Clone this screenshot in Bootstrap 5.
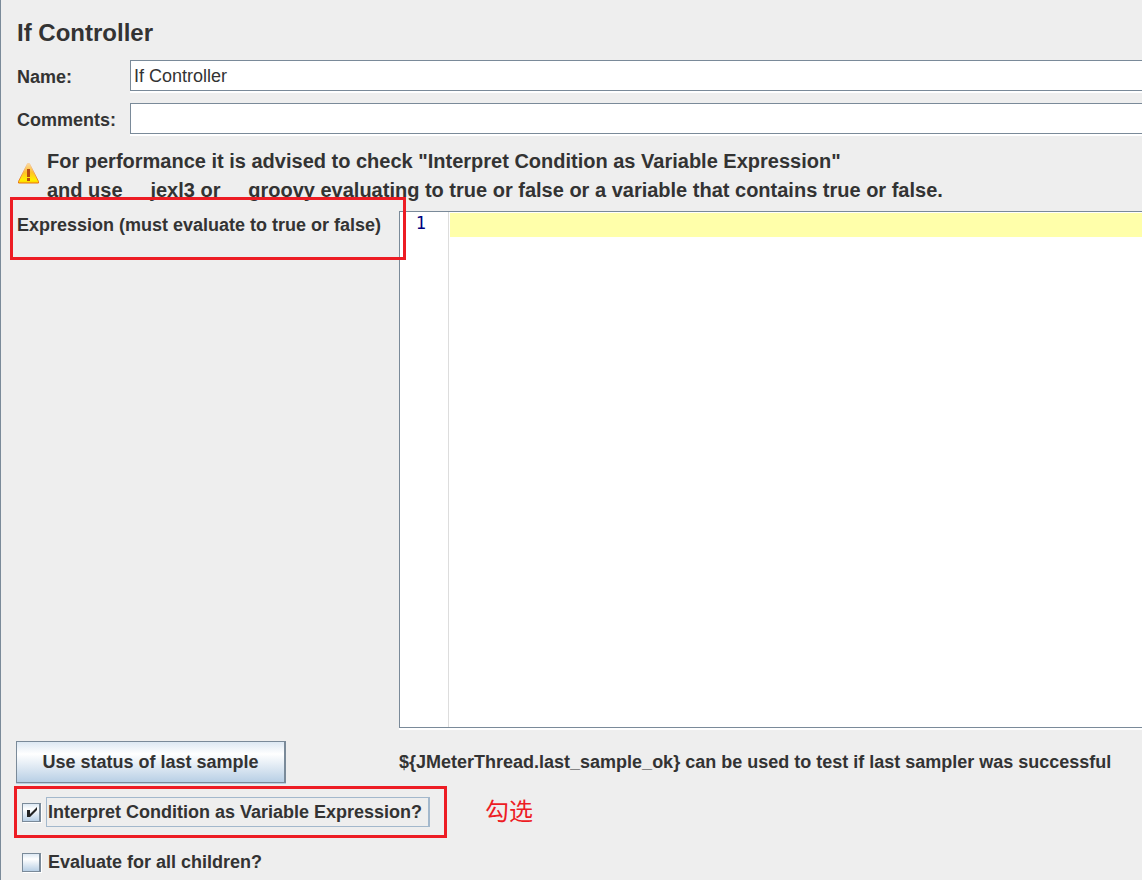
<!DOCTYPE html>
<html lang="en">
<head>
<meta charset="utf-8">
<meta name="viewport" content="width=device-width, initial-scale=1">
<title>If Controller</title>
<link href="https://cdn.jsdelivr.net/npm/bootstrap@5.3.0/dist/css/bootstrap.min.css" rel="stylesheet">
<style>
  :root { --edge: #7a8a99; --mark: #ed1c24; }
  body {
    background: #eee; color: #333;
    font-family: "Liberation Sans", Arial, sans-serif;
    font-size: 18px; line-height: 24px; font-weight: 700;
  }
  .panel { border-left: 1px solid var(--edge); padding: 17px 0 3px 16px; }
  .panel-title { font-size: 24px; line-height: 32px; font-weight: 700; margin-bottom: 11px; }
  .field-label { width: 113px; padding-top: 2px; }
  .field-row { margin-bottom: 12px; }
  .field-row .form-control {
    height: 31px; padding: 2px 3px 0; border: 1px solid var(--edge); border-right: 0;
    color: #333; font-size: 18px; line-height: 24px; box-shadow: 0 2px #fff;
  }
  .notice { font-size: 20px; line-height: 29px; gap: 7px; margin: 1px 0 6px; }
  .notice-icon { margin-bottom: 6px; }
  .expression-label { width: 382px; padding-top: 2px; }
  .editor { border: 1px solid var(--edge); border-right: 0; box-shadow: 0 2px #fff; }
  .gutter {
    width: 49px; border-right: 1px solid #ddd; padding-right: 22px;
    color: #00007f; font: 17px/22px "DejaVu Sans Mono", monospace;
  }
  .code-area {
    resize: none; margin-left: 1px; padding: 0 4px; border: 0;
    font: 17px/24px "Liberation Mono", monospace;
    background: linear-gradient(#ffffaa, #ffffaa) 0 1px / 100% 24px no-repeat #fff;
  }
  .status-row { margin-top: 13px; }
  .status-cell { width: 383px; margin-left: -1px; }
  .btn-metal {
    width: 270px; height: 42px; padding: 0; color: #333; font-size: 18px; font-weight: 700;
    border: 1px solid var(--edge); border-right-width: 2px; box-shadow: 0 1px #b8cfe5;
    background: linear-gradient(#dde8f3, #fff 30%, #b8cfe5);
  }
  .check-row { padding-left: 5px; gap: 5px; }
  .check-marked { height: 52px; margin: 3px 0 9px; }
  .check-row .form-check-input {
    width: 19px; height: 19px; margin: 0; border: 1px solid var(--edge); border-right-width: 2px;
    background-image: linear-gradient(#dde8f3, #fff 30%, #b8cfe5);
    background-size: 100% 100%; box-shadow: 1px 1px #fff;
  }
  .check-row .form-check-input:checked {
    background-color: transparent;
    background-image: url("data:image/svg+xml,%3Csvg xmlns='http://www.w3.org/2000/svg' viewBox='0 0 16 17'%3E%3Cpath d='M4 6h3v4l7-7v3L7 13H4z' fill='%23222'/%3E%3C/svg%3E"), linear-gradient(#dde8f3, #fff 30%, #b8cfe5);
  }
  .check-text { border: 1px solid transparent; padding: 2px 1px; }
  .check-focused { min-width: 384px; border-color: #a3b8cc; border-right-width: 2px; padding-right: 0; }
  .callout-box { border: 3px solid var(--mark); pointer-events: none; }
  .callout-expression { left: -7px; top: -14px; width: 396px; height: 63px; z-index: 2; }
  .callout-check { left: -3px; top: 0; width: 433px; height: 52px; }
  .callout-note {
    color: var(--mark); margin-left: 50px;
    font: 24px/32px "Liberation Sans", "Noto Sans CJK SC", sans-serif;
  }
</style>
</head>
<body>
<main class="panel min-vh-100 d-flex flex-column overflow-hidden">
  <h1 class="panel-title">If Controller</h1>

  <div class="field-row d-flex align-items-center">
    <label class="field-label flex-shrink-0" for="name">Name:</label>
    <input class="form-control rounded-0" id="name" type="text" value="If Controller">
  </div>
  <div class="field-row d-flex align-items-center">
    <label class="field-label flex-shrink-0" for="comments">Comments:</label>
    <input class="form-control rounded-0" id="comments" type="text">
  </div>

  <div class="notice d-flex align-items-center">
    <svg class="notice-icon flex-shrink-0" width="23" height="22" viewBox="0 0 23 22" aria-hidden="true">
      <defs>
        <linearGradient id="amber" x1="0" y1="0" x2="0" y2="1">
          <stop offset="0" stop-color="#fbd9a0"/><stop offset=".45" stop-color="#ffc02a"/><stop offset=".85" stop-color="#fff000"/><stop offset="1" stop-color="#ffd000"/>
        </linearGradient>
        <linearGradient id="rim" x1="0" y1="0" x2="0" y2="1">
          <stop offset="0" stop-color="#f5d3a5"/><stop offset="1" stop-color="#e8720c"/>
        </linearGradient>
      </defs>
      <path d="M10.5 1.5h2l9 18v1.500h-20v-1.500z" fill="url(#amber)" stroke="url(#rim)"/>
      <path d="M10 7h3v8h-3zM10 16h3v3h-3z" fill="#b84a10"/>
    </svg>
    <div>For performance it is advised to check "Interpret Condition as Variable Expression"<br>and use __jexl3 or __groovy evaluating to true or false or a variable that contains true or false.</div>
  </div>

  <div class="d-flex flex-grow-1 position-relative">
    <label class="expression-label flex-shrink-0" for="expression">Expression (must evaluate to true or false)</label>
    <div class="editor d-flex flex-grow-1 bg-white">
      <div class="gutter text-end flex-shrink-0">1</div>
      <textarea class="code-area flex-grow-1" id="expression" spellcheck="false"></textarea>
    </div>
    <div class="callout-box callout-expression position-absolute"></div>
  </div>

  <div class="status-row d-flex align-items-center">
    <div class="status-cell flex-shrink-0"><button class="btn btn-metal rounded-0 d-block" type="button">Use status of last sample</button></div>
    <div class="text-nowrap">${JMeterThread.last_sample_ok} can be used to test if last sampler was successful</div>
  </div>

  <div class="check-row check-marked d-flex align-items-center position-relative">
    <input class="form-check-input rounded-0" id="interpret" type="checkbox" checked>
    <label class="check-text check-focused" for="interpret">Interpret Condition as Variable Expression?</label>
    <span class="callout-note" lang="zh-CN">勾选</span>
    <div class="callout-box callout-check position-absolute"></div>
  </div>
  <div class="check-row d-flex align-items-center">
    <input class="form-check-input rounded-0" id="children" type="checkbox">
    <label class="check-text" for="children">Evaluate for all children?</label>
  </div>
</main>
<script src="https://cdn.jsdelivr.net/npm/bootstrap@5.3.0/dist/js/bootstrap.bundle.min.js"></script>
</body>
</html>
